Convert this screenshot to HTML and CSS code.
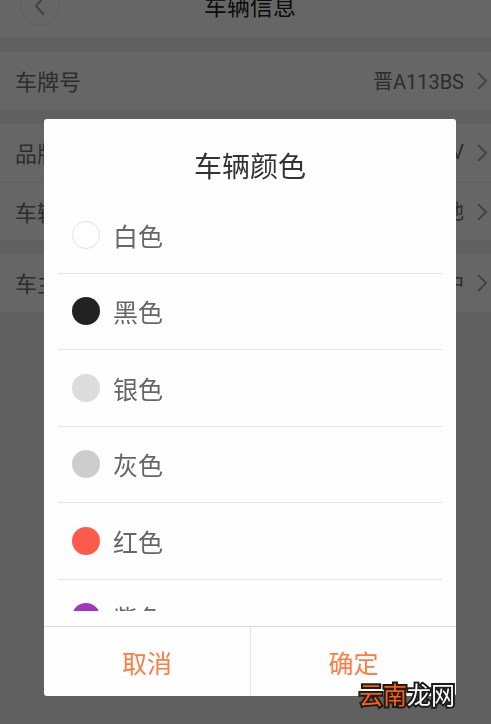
FILE: index.html
```html
<!DOCTYPE html>
<html lang="zh-CN">
<head>
<meta charset="utf-8">
<meta name="viewport" content="width=device-width, initial-scale=1">
<title>车辆信息</title>
<link rel="stylesheet" href="styles.css">
</head>
<body>
<main class="page">
  <header class="header">
    <button class="back" type="button" aria-label="返回"><svg width="12" height="20" viewBox="0 0 12 20"><path d="M10 1 2 10l8 9"/></svg></button>
    <h1 class="header-title">车辆信息</h1>
  </header>
  <section class="group">
    <a class="row" href="#"><span class="label">车牌号</span><span class="value">晋A113BS</span><svg class="chevron" width="10" height="18" viewBox="0 0 10 18"><path d="m1 1 8 8-8 8"/></svg></a>
  </section>
  <section class="group">
    <a class="row" href="#"><span class="label">品牌</span><span class="value">SUV</span><svg class="chevron" width="10" height="18" viewBox="0 0 10 18"><path d="m1 1 8 8-8 8"/></svg></a>
    <a class="row" href="#"><span class="label">车辆</span><span class="value">其他</span><svg class="chevron" width="10" height="18" viewBox="0 0 10 18"><path d="m1 1 8 8-8 8"/></svg></a>
  </section>
  <section class="group">
    <a class="row" href="#"><span class="label">车主</span><span class="value">中</span><svg class="chevron" width="10" height="18" viewBox="0 0 10 18"><path d="m1 1 8 8-8 8"/></svg></a>
  </section>
</main>
<div class="overlay">
  <form class="dialog" role="dialog" aria-labelledby="dialog-title">
    <h2 class="dialog-title" id="dialog-title">车辆颜色</h2>
    <div class="list">
      <div class="options">
        <label class="option"><input class="swatch white" type="radio" name="color">白色</label>
        <label class="option"><input class="swatch black" type="radio" name="color">黑色</label>
        <label class="option"><input class="swatch silver" type="radio" name="color">银色</label>
        <label class="option"><input class="swatch gray" type="radio" name="color">灰色</label>
        <label class="option"><input class="swatch red" type="radio" name="color">红色</label>
        <label class="option"><input class="swatch purple" type="radio" name="color">紫色</label>
      </div>
    </div>
    <div class="actions">
      <button class="action" type="button">取消</button>
      <button class="action" type="button">确定</button>
    </div>
    <div class="watermark"><span class="watermark-accent">云南</span>龙网</div>
  </form>
</div>
</body>
</html>
```
FILE: styles.css
```css
* {
  box-sizing: border-box;
}

body {
  margin: 0;
  background: #f1f1f1;
  color: #707070;
  font-family: Roboto, "Noto Sans CJK SC", sans-serif;
}

button {
  margin: 0;
  padding: 0;
  border: 0;
  background: none;
  font: inherit;
}

svg {
  fill: none;
  stroke: #aaa;
  stroke-width: 2;
}

.page {
  min-height: 100vh;
  overflow: hidden;
}

/* The header is scrolled partly out of view. */
.header {
  display: grid;
  grid-template-columns: 40px 1fr 40px;
  align-items: center;
  height: 61px;
  margin-top: -24px;
  padding: 0 11px 1px 20px;
  background: #fff;
}

.back {
  display: flex;
  align-items: center;
  justify-content: center;
  width: 40px;
  height: 40px;
  border: 1px solid #eee;
  border-radius: 50%;
}

.header-title {
  margin: 0;
  padding-top: 4px;
  color: #222;
  font-size: 23px;
  font-weight: 400;
  line-height: 32px;
  text-align: center;
}

.group {
  margin-top: 14px;
  background: #fff;
}

.header + .group {
  margin-top: 15px;
}

.row {
  display: flex;
  align-items: center;
  height: 58px;
  padding: 0 4px 0 15px;
  color: inherit;
  text-decoration: none;
}

.row + .row {
  border-top: 1px solid #eee;
}

.label,
.value {
  padding-bottom: 2px;
}

.label {
  flex: 1;
  font-size: 22px;
}

.value {
  font-size: 20px;
}

.chevron {
  margin-left: 13px;
}

.overlay {
  position: fixed;
  inset: 0;
  padding: 119px 35px 28px 44px;
  background: rgba(0, 0, 0, .6);
}

.dialog {
  position: relative;
  border-radius: 3px;
  background: #fefefe;
}

.dialog-title {
  margin: 0;
  padding: 29px 0 9px;
  color: #333;
  font-size: 28px;
  font-weight: 400;
  line-height: 40px;
  text-align: center;
}

.list {
  height: 414px;
  margin: 0 14px 15px;
  overflow: hidden;
}

.options {
  display: grid;
  grid-template-rows: repeat(6, 1fr);
  height: 459px;
}

.option {
  display: flex;
  align-items: center;
  gap: 13px;
  padding: 0 14px;
  border-bottom: 1px solid #e5e5e5;
  color: #666;
  font-size: 25px;
}

.swatch {
  width: 28px;
  height: 28px;
  margin: 0;
  border-radius: 50%;
  appearance: none;
}

.white {
  border: 1px solid #e3e3e3;
  background: #fff;
}

.black {
  background: #222;
}

.silver {
  background: #dcdcdc;
}

.gray {
  background: #cdcdcd;
}

.red {
  background: #ff5b4b;
}

.purple {
  background: #a237bb;
}

.actions {
  display: grid;
  grid-template-columns: 1fr 1fr;
  height: 70px;
  border-top: 1px solid #dadada;
}

.action {
  color: #ff7c43;
  font-size: 25px;
}

.action + .action {
  border-left: 1px solid #e3e3e3;
}

.watermark {
  position: absolute;
  right: 1px;
  bottom: -16px;
  color: #fff;
  font-size: 24px;
  line-height: 32px;
  -webkit-text-stroke: 4px #1c1c1c;
  paint-order: stroke fill;
}

.watermark-accent {
  color: #ff5d0c;
}
```
